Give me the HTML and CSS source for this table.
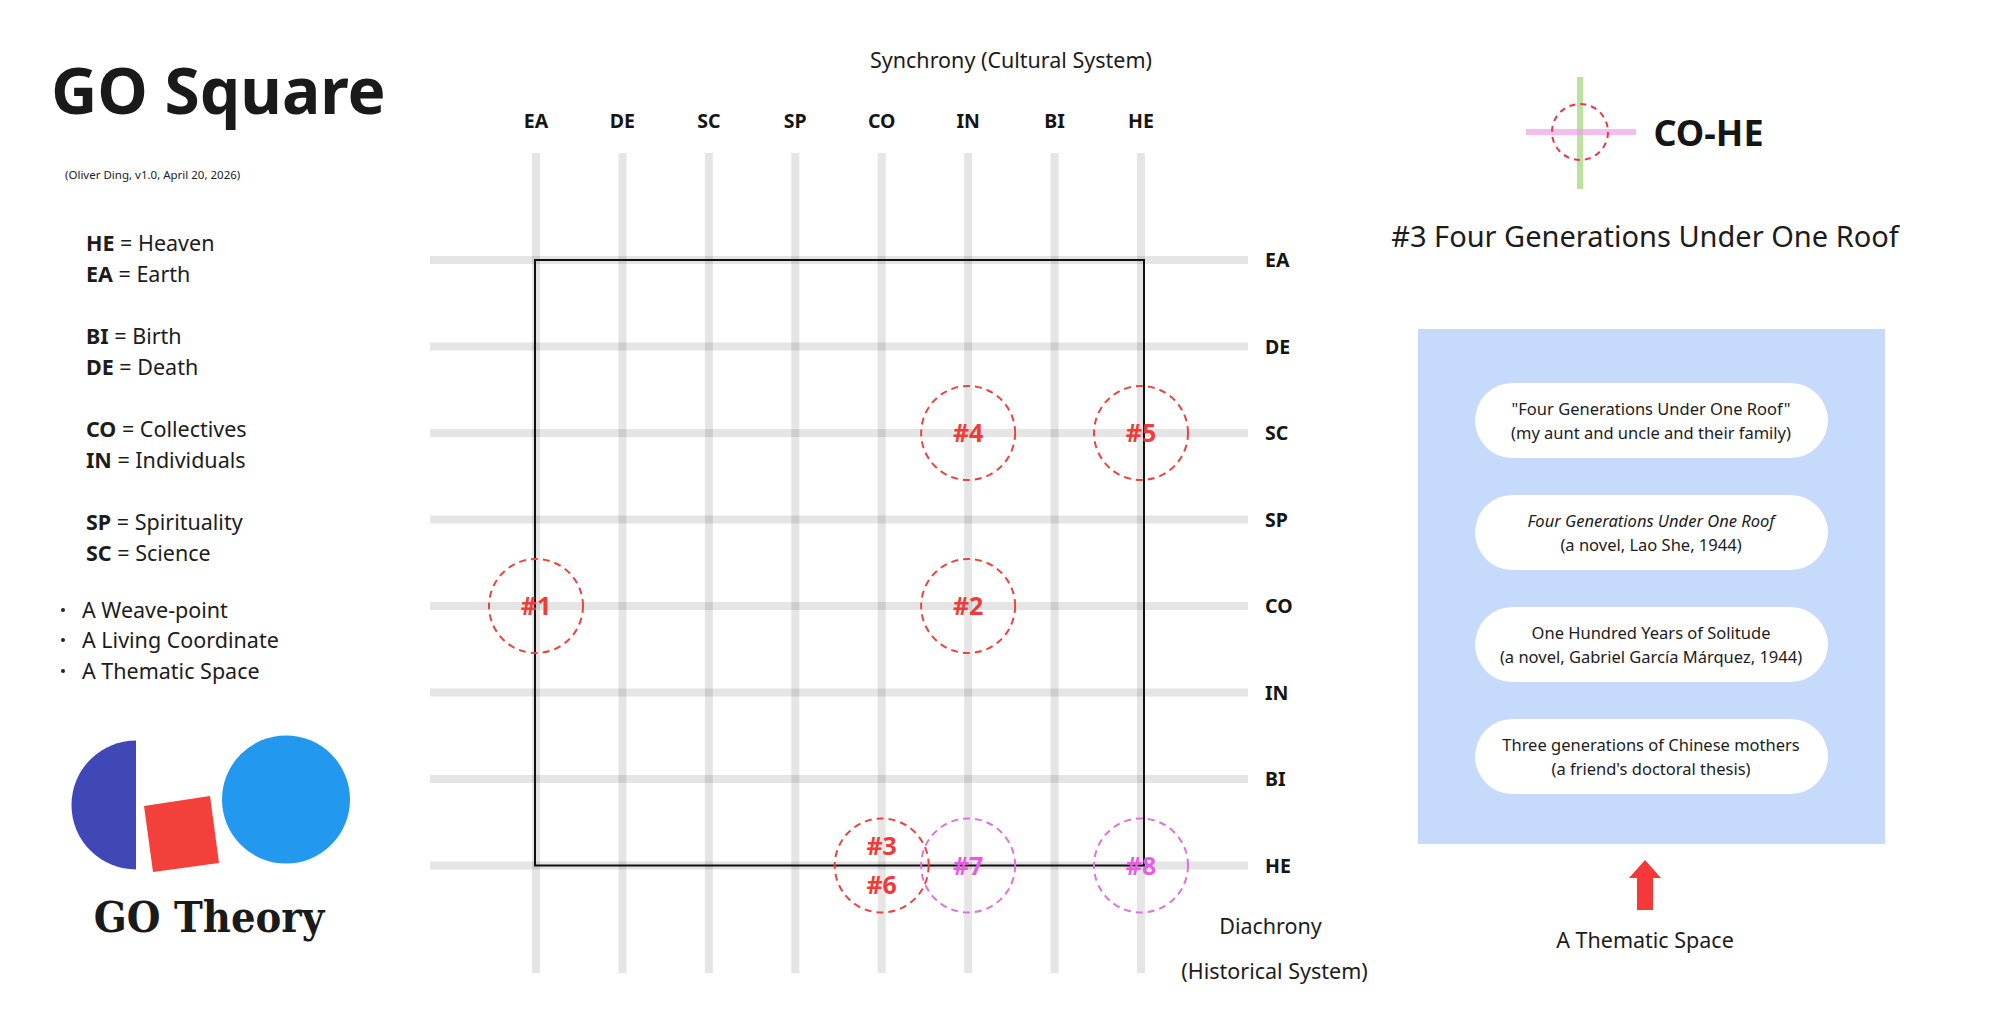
FILE: index.html
```html
<!DOCTYPE html>
<html lang="en">
<head>
<meta charset="utf-8">
<title>GO Square</title>
<link rel="stylesheet" href="styles.css">
</head>
<body>
<div class="page">
  <aside class="left">
    <h1 class="title">GO Square</h1>
    <p class="sub">(Oliver Ding, v1.0, April 20, 2026)</p>
    <div class="legend">
      <div class="group">
        <div><b>HE</b> = Heaven</div>
        <div><b>EA</b> = Earth</div>
      </div>
      <div class="group">
        <div><b>BI</b> = Birth</div>
        <div><b>DE</b> = Death</div>
      </div>
      <div class="group">
        <div><b>CO</b> = Collectives</div>
        <div><b>IN</b> = Individuals</div>
      </div>
      <div class="group">
        <div><b>SP</b> = Spirituality</div>
        <div><b>SC</b> = Science</div>
      </div>
    </div>
    <ul class="bullets">
      <li><span class="dot"></span>A Weave-point</li>
      <li><span class="dot"></span>A Living Coordinate</li>
      <li><span class="dot"></span>A Thematic Space</li>
    </ul>
    <svg class="logo" width="300" height="150" viewBox="0 0 300 150">
      <path class="logo-half" d="M76 11.5 A64.5 64.5 0 0 0 76 140.5 Z"/>
      <polygon class="logo-square" points="84,77 150,67 159,134 93,143"/>
      <circle class="logo-circle" cx="226" cy="70.5" r="64"/>
    </svg>
    <div class="gotheory">GO Theory</div>
  </aside>

  <div class="chart">
    <svg class="grid" width="880" height="1028" viewBox="0 0 880 1028">
      <text class="axis-title" x="591" y="67.5">Synchrony (Cultural System)</text>
      <g class="vlines">
        <line x1="116" y1="153" x2="116" y2="973"/>
        <line x1="202.43" y1="153" x2="202.43" y2="973"/>
        <line x1="288.86" y1="153" x2="288.86" y2="973"/>
        <line x1="375.29" y1="153" x2="375.29" y2="973"/>
        <line x1="461.71" y1="153" x2="461.71" y2="973"/>
        <line x1="548.14" y1="153" x2="548.14" y2="973"/>
        <line x1="634.57" y1="153" x2="634.57" y2="973"/>
        <line x1="721" y1="153" x2="721" y2="973"/>
      </g>
      <g class="hlines">
        <line x1="10" y1="260" x2="828" y2="260"/>
        <line x1="10" y1="346.5" x2="828" y2="346.5"/>
        <line x1="10" y1="433" x2="828" y2="433"/>
        <line x1="10" y1="519.5" x2="828" y2="519.5"/>
        <line x1="10" y1="606" x2="828" y2="606"/>
        <line x1="10" y1="692.5" x2="828" y2="692.5"/>
        <line x1="10" y1="779" x2="828" y2="779"/>
        <line x1="10" y1="865.5" x2="828" y2="865.5"/>
      </g>
      <g class="top-labels">
        <text x="116" y="128">EA</text>
        <text x="202.43" y="128">DE</text>
        <text x="288.86" y="128">SC</text>
        <text x="375.29" y="128">SP</text>
        <text x="461.71" y="128">CO</text>
        <text x="548.14" y="128">IN</text>
        <text x="634.57" y="128">BI</text>
        <text x="721" y="128">HE</text>
      </g>
      <g class="side-labels">
        <text x="845" y="267">EA</text>
        <text x="845" y="353.5">DE</text>
        <text x="845" y="440">SC</text>
        <text x="845" y="526.5">SP</text>
        <text x="845" y="613">CO</text>
        <text x="845" y="699.5">IN</text>
        <text x="845" y="786">BI</text>
        <text x="845" y="872.5">HE</text>
      </g>
      <rect class="square" x="115" y="260" width="609" height="605.5"/>
      <g class="ring-red">
        <circle cx="116" cy="606" r="47"/>
        <circle cx="548.14" cy="606" r="47"/>
        <circle cx="548.14" cy="433" r="47"/>
        <circle cx="721" cy="433" r="47"/>
        <circle cx="461.71" cy="865.5" r="47"/>
      </g>
      <g class="ring-pink">
        <circle cx="548.14" cy="865.5" r="47"/>
        <circle cx="721" cy="865.5" r="47"/>
      </g>
      <g class="num num-red">
        <text x="116" y="615">#1</text>
        <text x="548.14" y="615">#2</text>
        <text x="548.14" y="442">#4</text>
        <text x="721" y="442">#5</text>
        <text x="461.71" y="855">#3</text>
        <text x="461.71" y="894">#6</text>
      </g>
      <g class="num num-pink">
        <text x="548.14" y="874.5">#7</text>
        <text x="721" y="874.5">#8</text>
      </g>
      <text class="axis-title" x="850.5" y="933.5">Diachrony</text>
      <text class="axis-title" x="854.5" y="978.5">(Historical System)</text>
    </svg>
  </div>

  <aside class="right">
    <div class="cross-row">
      <svg class="cross" width="110" height="112" viewBox="0 0 110 112">
        <line class="cross-v" x1="54" y1="0" x2="54" y2="112"/>
        <line class="cross-h" x1="0" y1="55" x2="110" y2="55"/>
        <circle class="cross-ring" cx="54" cy="55" r="28"/>
      </svg>
      <span class="cross-label">CO-HE</span>
    </div>
    <h2 class="case-title">#3 Four Generations Under One Roof</h2>
    <div class="box">
      <div class="pill">
        <span>"Four Generations Under One Roof"</span>
        <span>(my aunt and uncle and their family)</span>
      </div>
      <div class="pill">
        <span><i>Four Generations Under One Roof</i></span>
        <span>(a novel, Lao She, 1944)</span>
      </div>
      <div class="pill">
        <span>One Hundred Years of Solitude</span>
        <span>(a novel, Gabriel García Márquez, 1944)</span>
      </div>
      <div class="pill">
        <span>Three generations of Chinese mothers</span>
        <span>(a friend's doctoral thesis)</span>
      </div>
    </div>
    <svg class="arrow" width="32" height="50" viewBox="0 0 32 50">
      <polygon class="arrow-shape" points="16,0 32,18 24,18 24,50 8,50 8,18 0,18"/>
    </svg>
    <div class="thematic">A Thematic Space</div>
  </aside>
</div>
</body>
</html>
```

FILE: styles.css
```css
* { box-sizing: border-box; }

html, body {
  margin: 0;
  padding: 0;
  background: #ffffff;
}

body {
  width: 2000px;
  height: 1028px;
  overflow: hidden;
  font-family: "Noto Sans", "Open Sans", "DejaVu Sans", sans-serif;
  color: #1c1c1c;
}

.page {
  display: flex;
  width: 2000px;
  height: 1028px;
}

/* ---------- left column ---------- */
.left {
  width: 420px;
  flex: none;
  padding-top: 50px;
  padding-left: 51px;
  display: flex;
  flex-direction: column;
}

.title {
  margin: 0;
  font-size: 64px;
  line-height: 80px;
  font-weight: 700;
  color: #1a1a1a;
  white-space: nowrap;
}

.sub {
  margin: 37px 0 0 14px;
  font-size: 11.5px;
  line-height: 16px;
  color: #222;
}

.legend {
  margin-top: 44px;
  padding-left: 35px;
  font-size: 21.5px;
  line-height: 31px;
  display: flex;
  flex-direction: column;
  gap: 31px;
}

.legend b { font-weight: 700; }

.bullets {
  list-style: none;
  margin: 26.5px 0 0 0;
  padding: 0 0 0 10px;
  font-size: 21.5px;
  line-height: 30.5px;
}

.bullets li {
  display: flex;
  align-items: center;
}

.dot {
  width: 4px;
  height: 4px;
  border-radius: 50%;
  background: #222;
  margin-right: 17px;
  flex: none;
}

.logo {
  display: block;
  margin-top: 43px;
  margin-left: 9px;
}

.logo-half { fill: #3F48B6; }
.logo-square { fill: #F4403A; }
.logo-circle { fill: #2398EF; }

.gotheory {
  width: 300px;
  margin-left: 8px;
  margin-top: 13px;
  text-align: center;
  font-family: "DejaVu Serif", serif;
  font-weight: 700;
  font-stretch: condensed;
  font-size: 43px;
  line-height: 50px;
  color: #1a1a1a;
}

/* ---------- chart ---------- */
.chart {
  width: 880px;
  flex: none;
}

.grid {
  display: block;
  overflow: visible;
}

.vlines line,
.hlines line {
  stroke: rgba(0, 0, 0, 0.1);
  stroke-width: 8;
}

.axis-title {
  font-family: "Noto Sans", sans-serif;
  font-size: 21.5px;
  fill: #1c1c1c;
  text-anchor: middle;
}

.top-labels text {
  font-family: "Noto Sans", sans-serif;
  font-weight: 700;
  font-size: 19.5px;
  fill: #151515;
  text-anchor: middle;
}

.side-labels text {
  font-family: "Noto Sans", sans-serif;
  font-weight: 700;
  font-size: 19.5px;
  fill: #151515;
}

.square {
  fill: none;
  stroke: #111;
  stroke-width: 2;
}

.ring-red circle {
  fill: none;
  stroke: #E8453F;
  stroke-width: 2;
  stroke-dasharray: 7 5;
}

.ring-pink circle {
  fill: none;
  stroke: #DE72DE;
  stroke-width: 2;
  stroke-dasharray: 7 5;
}

.num text {
  font-family: "Noto Sans", sans-serif;
  font-weight: 700;
  font-size: 25px;
  text-anchor: middle;
}

.num-red text { fill: #F03C38; }
.num-pink text { fill: #E85CE4; }

/* ---------- right column ---------- */
.right {
  width: 700px;
  flex: none;
  padding-top: 77px;
  padding-right: 10px;
  display: flex;
  flex-direction: column;
  align-items: center;
}

.cross-row {
  display: flex;
  align-items: center;
  gap: 17px;
  height: 112px;
}

.cross { display: block; }

.cross-v {
  stroke: rgba(150, 210, 110, 0.65);
  stroke-width: 6;
}

.cross-h {
  stroke: rgba(240, 160, 232, 0.7);
  stroke-width: 6;
}

.cross-ring {
  fill: none;
  stroke: #E23A48;
  stroke-width: 2;
  stroke-dasharray: 6 5;
}

.cross-label {
  font-size: 36px;
  font-weight: 700;
  line-height: 44px;
  color: #151515;
}

.case-title {
  margin: 27px 0 0 0;
  font-size: 29px;
  font-weight: 400;
  line-height: 40px;
  color: #1c1c1c;
  white-space: nowrap;
}

.box {
  margin-top: 73px;
  margin-left: 12px;
  width: 467px;
  height: 515px;
  background: #C6DAFB;
  padding-top: 54px;
  display: flex;
  flex-direction: column;
  align-items: center;
  gap: 37px;
}

.pill {
  width: 353px;
  height: 75px;
  border-radius: 38px;
  background: #ffffff;
  display: flex;
  flex-direction: column;
  align-items: center;
  justify-content: center;
  font-size: 16.5px;
  line-height: 23.5px;
  color: #1c1c1c;
  white-space: nowrap;
}

.arrow {
  display: block;
  margin-top: 16px;
}

.arrow-shape { fill: #F5383A; }

.thematic {
  margin-top: 15px;
  font-size: 21.5px;
  line-height: 30px;
  color: #1c1c1c;
}
```
